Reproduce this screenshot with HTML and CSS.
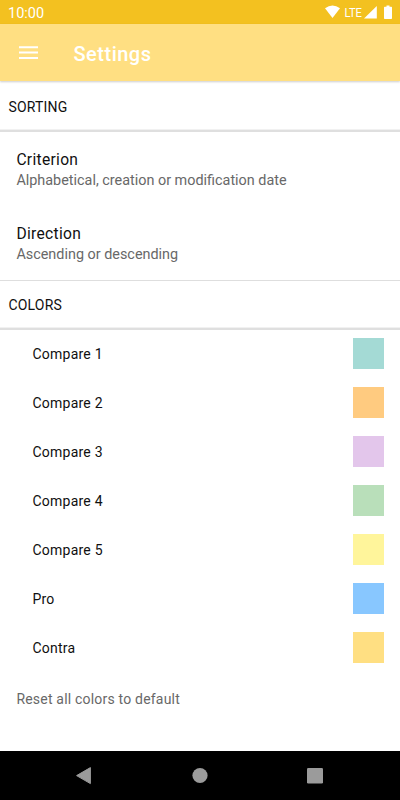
FILE: index.html
```html
<!DOCTYPE html>
<html lang="en">
<head>
<meta charset="utf-8">
<title>Settings</title>
<link rel="stylesheet" href="styles.css">
</head>
<body>
<div class="status">
  <span class="time">10:00</span>
  <svg class="signals" width="78" height="24" viewBox="0 0 78 24" fill="#fff">
    <path d="M5 8.2Q12.500 2.800 20 8.200L12.500 18Z"/>
    <path d="M44 18.500H56.800V6Z"/>
    <path d="M64.700 6.800H66.500V5.500H69.500V6.800H71.300Q72 6.800 72 7.500V18.200Q72 18.900 71.300 18.900H64.700Q64 18.900 64 18.200V7.500Q64 6.800 64.700 6.800Z"/>
    <text class="lte" x="24.400" y="16.600" textLength="17.600" lengthAdjust="spacingAndGlyphs">LTE</text>
  </svg>
</div>
<header class="appbar">
  <svg class="menu" width="20" height="14" viewBox="0 0 20 14" fill="#fff"><path d="M0 .3h19v2H0zM0 5.600h19v2H0zM0 11h19v2H0z"/></svg>
  <h1>Settings</h1>
</header>
<main>
  <h2 class="section sorting"><span>SORTING</span></h2>
  <div class="pref"><div class="title criterion"><span>Criterion</span></div><div class="summary"><span>Alphabetical, creation or modification date</span></div></div>
  <div class="pref last"><div class="title"><span>Direction</span></div><div class="summary"><span>Ascending or descending</span></div></div>
  <h2 class="section colors"><span>COLORS</span></h2>
  <ul>
    <li><span>Compare 1</span><i class="swatch teal"></i></li>
    <li><span>Compare 2</span><i class="swatch orange"></i></li>
    <li><span>Compare 3</span><i class="swatch purple"></i></li>
    <li><span>Compare 4</span><i class="swatch green"></i></li>
    <li><span>Compare 5</span><i class="swatch yellow"></i></li>
    <li><span>Pro</span><i class="swatch blue"></i></li>
    <li><span>Contra</span><i class="swatch amber"></i></li>
  </ul>
  <div class="reset"><span>Reset all colors to default</span></div>
</main>
<nav>
  <svg width="400" height="49" viewBox="0 0 400 49" fill="#9b9b9b">
    <path d="M76.600 24.600L90.400 16.600V32.600Z" stroke="#9b9b9b" stroke-linejoin="round"/>
    <circle cx="200" cy="24.500" r="7.600"/>
    <rect x="307" y="17" width="16" height="15.600" rx="1.300"/>
  </svg>
</nav>
</body>
</html>
```
FILE: styles.css
```css
* { box-sizing: border-box; margin: 0; padding: 0; }
body {
  width: 400px;
  height: 800px;
  overflow: hidden;
  display: flex;
  flex-direction: column;
  background: #fff;
  color: #101010;
  font-family: Roboto, "Liberation Sans", sans-serif;
  font-size: 14px;
}
.status {
  height: 24px;
  flex: none;
  display: flex;
  justify-content: space-between;
  background: #f3c120;
  color: #fff;
  padding: 0 2px 0 8px;
}
.time { font-size: 14.500px; line-height: 27px; }
.lte { font-family: Roboto, sans-serif; font-size: 12px; }
.appbar {
  height: 57px;
  flex: none;
  display: flex;
  align-items: center;
  gap: 34.500px;
  padding: 0 19px;
  background: #ffdf82;
  color: #fff;
  box-shadow: 0 1px 2px rgba(0, 0, 0, .2);
}
.appbar h1 { font-size: 20px; font-weight: 500; letter-spacing: .5px; line-height: 24px; padding-top: 2px; }
main { flex: 1; min-height: 0; }
.section {
  font-size: 14px;
  font-weight: 400;
  letter-spacing: .2px;
  padding-left: 8.400px;
  border-bottom: 2px solid #dfdfdf;
  box-shadow: inset 0 -1px #f1f1f1;
}
.sorting { height: 51px; line-height: 52px; }
.colors { height: 49px; line-height: 48px; }
.pref { height: 74px; padding: 18px 16.400px 0; }
.pref.last { height: 75px; border-bottom: 1px solid #dedede; }
.title { font-size: 15.600px; line-height: 20px; letter-spacing: .3px; }
.summary { font-size: 14.400px; line-height: 20px; padding-top: 1px; color: #686868; }
ul { list-style: none; }
li {
  height: 49px;
  display: flex;
  justify-content: space-between;
  align-items: flex-start;
  padding: 8px 16px 0 32.400px;
  line-height: 33px;
  letter-spacing: .25px;
}
.swatch { width: 31px; height: 31px; }
.teal { background: #a4dad5; }
.orange { background: #ffcb80; }
.purple { background: #e3c6eb; }
.green { background: #b9dfba; }
.yellow { background: #fff59b; }
.blue { background: #88c7ff; }
.amber { background: #ffdf82; }
.reset { padding: 15px 16.400px; line-height: 22px; color: #686868; letter-spacing: .2px; }
nav { height: 49px; flex: none; background: #000; }
nav svg { display: block; }
```
